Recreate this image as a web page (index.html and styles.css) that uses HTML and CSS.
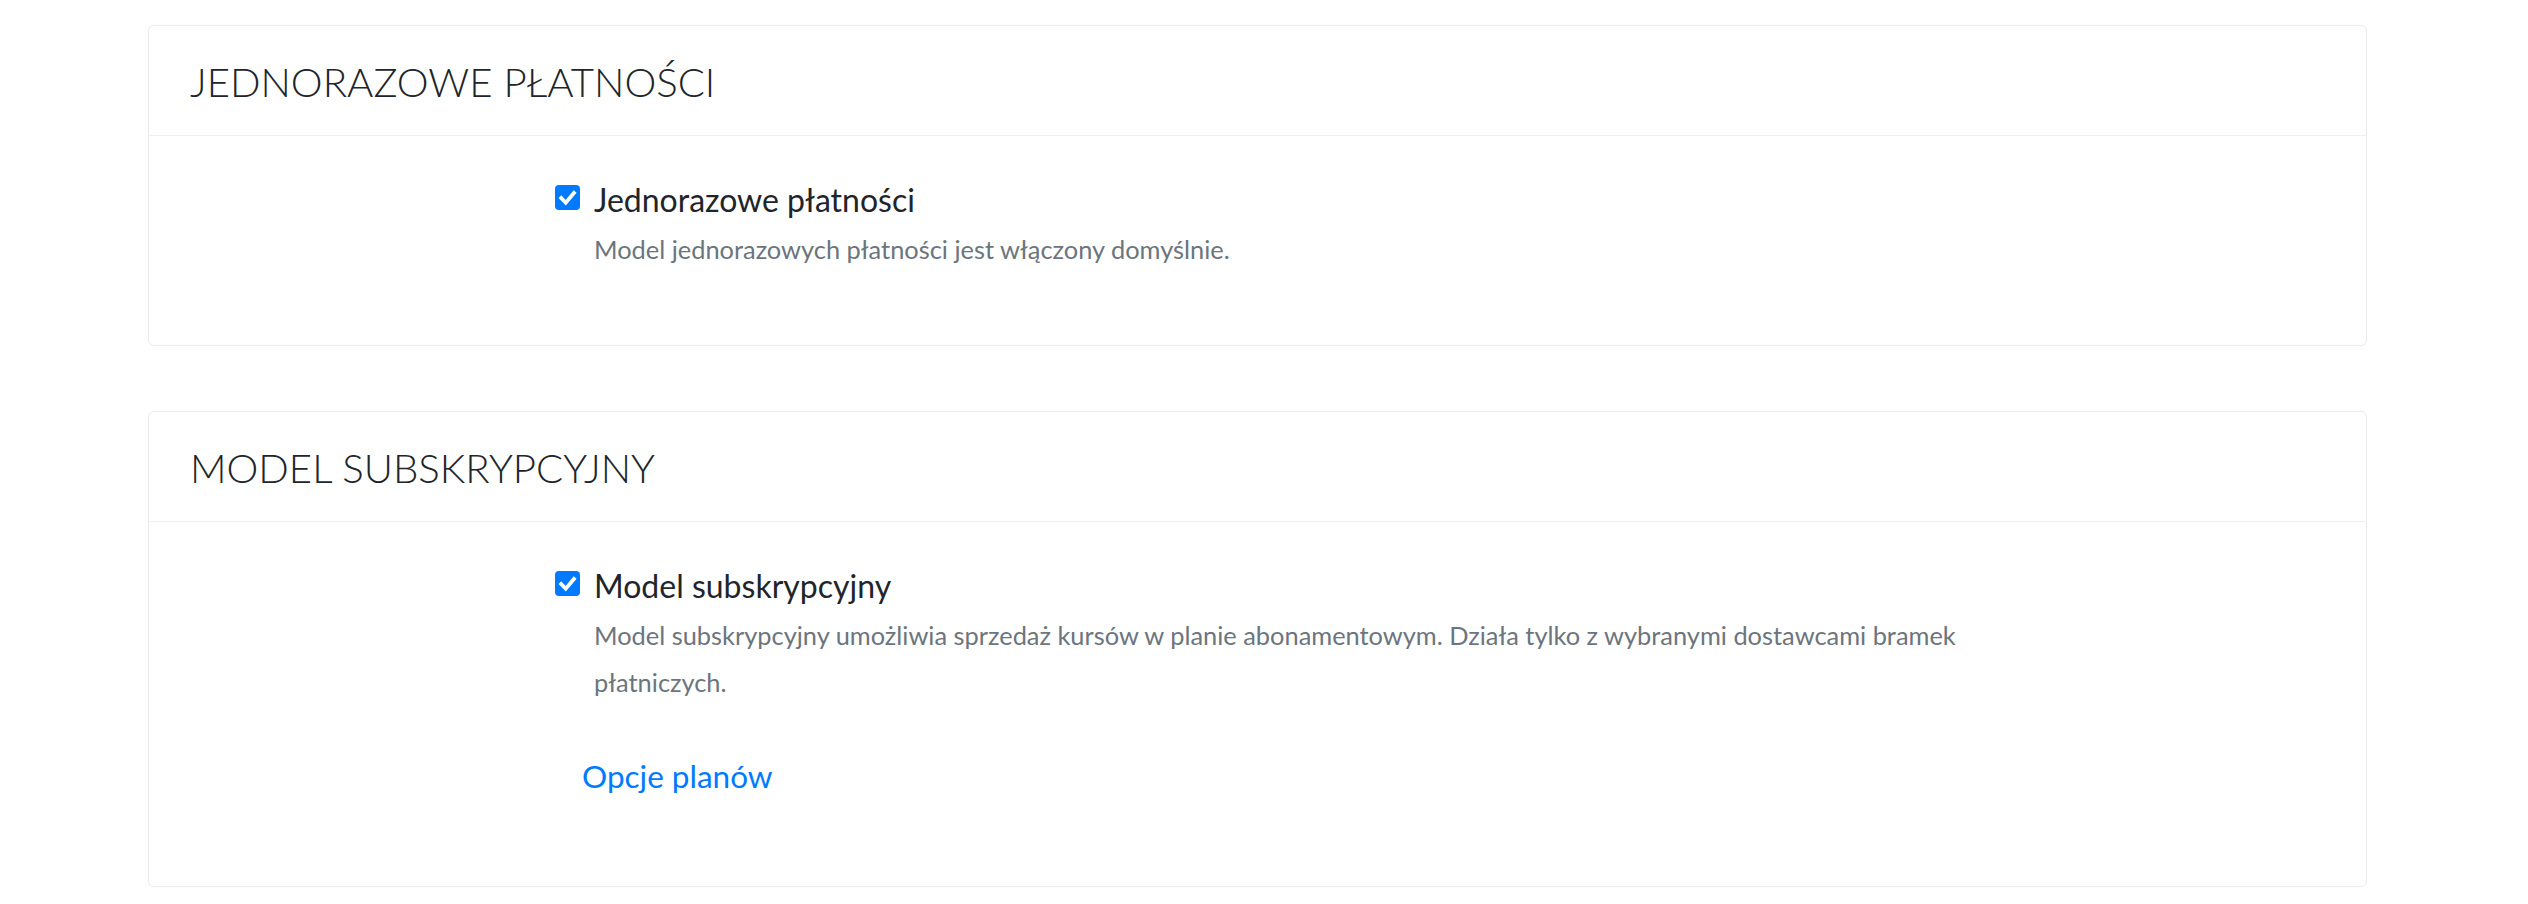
FILE: index.html
```html
<!DOCTYPE html>
<html lang="pl">
<head>
<meta charset="utf-8">
<title>Płatności</title>
<link rel="stylesheet" href="styles.css">
</head>
<body>
<main class="page">
  <section class="card">
    <header class="card-header">
      <h2 class="card-title">JEDNORAZOWE PŁATNOŚCI</h2>
    </header>
    <div class="card-body card-body-short">
      <div class="field">
        <label class="check">
          <span class="box"><svg viewBox="0 0 24 24" width="25" height="25"><polyline points="6,12.5 10.3,17 18.2,7.6" fill="none" stroke="#fff" stroke-width="3.6" stroke-linecap="square" stroke-linejoin="miter"/></svg></span>
          <span class="check-label">Jednorazowe płatności</span>
        </label>
        <p class="help">Model jednorazowych płatności jest włączony domyślnie.</p>
      </div>
    </div>
  </section>

  <section class="card">
    <header class="card-header">
      <h2 class="card-title">MODEL SUBSKRYPCYJNY</h2>
    </header>
    <div class="card-body card-body-long">
      <div class="field">
        <label class="check">
          <span class="box"><svg viewBox="0 0 24 24" width="25" height="25"><polyline points="6,12.5 10.3,17 18.2,7.6" fill="none" stroke="#fff" stroke-width="3.6" stroke-linecap="square" stroke-linejoin="miter"/></svg></span>
          <span class="check-label">Model subskrypcyjny</span>
        </label>
        <p class="help">Model subskrypcyjny umożliwia sprzedaż kursów w planie abonamentowym. Działa tylko z wybranymi dostawcami bramek płatniczych.</p>
        <a class="plans-link" href="#">Opcje planów</a>
      </div>
    </div>
  </section>
</main>
</body>
</html>
```

FILE: styles.css
```css
* { box-sizing: border-box; }

html, body {
  margin: 0;
  padding: 0;
  background: #ffffff;
}

body {
  font-family: Lato, "Open Sans", "Liberation Sans", sans-serif;
  color: #212529;
}

.page {
  padding: 25px 0 0 148px;
  width: 2367px;
}

.card {
  border: 1px solid #ebebeb;
  border-radius: 6px;
  background: #fff;
}

.card + .card {
  margin-top: 65px;
}

.card-header {
  height: 110px;
  border-bottom: 1px solid #f0f0f0;
  display: flex;
  align-items: center;
  padding: 0 41px;
}

.card-title {
  margin: 0;
  font-weight: 300;
  font-size: 40.2px;
  line-height: 1;
  color: #212529;
  padding-top: 3px;
}

.card-body {
  padding: 49px 42px 0 406px;
}

.card-body-short { padding-bottom: 72px; }
.card-body-long { padding-bottom: 87px; }

.field {
  max-width: 1440px;
}

.check {
  display: flex;
  align-items: flex-start;
  cursor: pointer;
}

.box {
  flex: none;
  width: 25px;
  height: 25px;
  border-radius: 4px;
  background: #007bff;
  display: flex;
  align-items: center;
  justify-content: center;
  margin-right: 14px;
}

.box svg { display: block; }

.check-label {
  font-size: 32px;
  line-height: 36px;
  margin-top: -3px;
  color: #212529;
}

.help {
  margin: 8px 0 0;
  padding-left: 39px;
  font-size: 25.4px;
  line-height: 47px;
  color: #6c757d;
}

.plans-link {
  display: inline-block;
  margin-top: 48px;
  margin-left: 27px;
  font-size: 31.5px;
  line-height: 45px;
  color: #007bff;
  text-decoration: none;
}
```
